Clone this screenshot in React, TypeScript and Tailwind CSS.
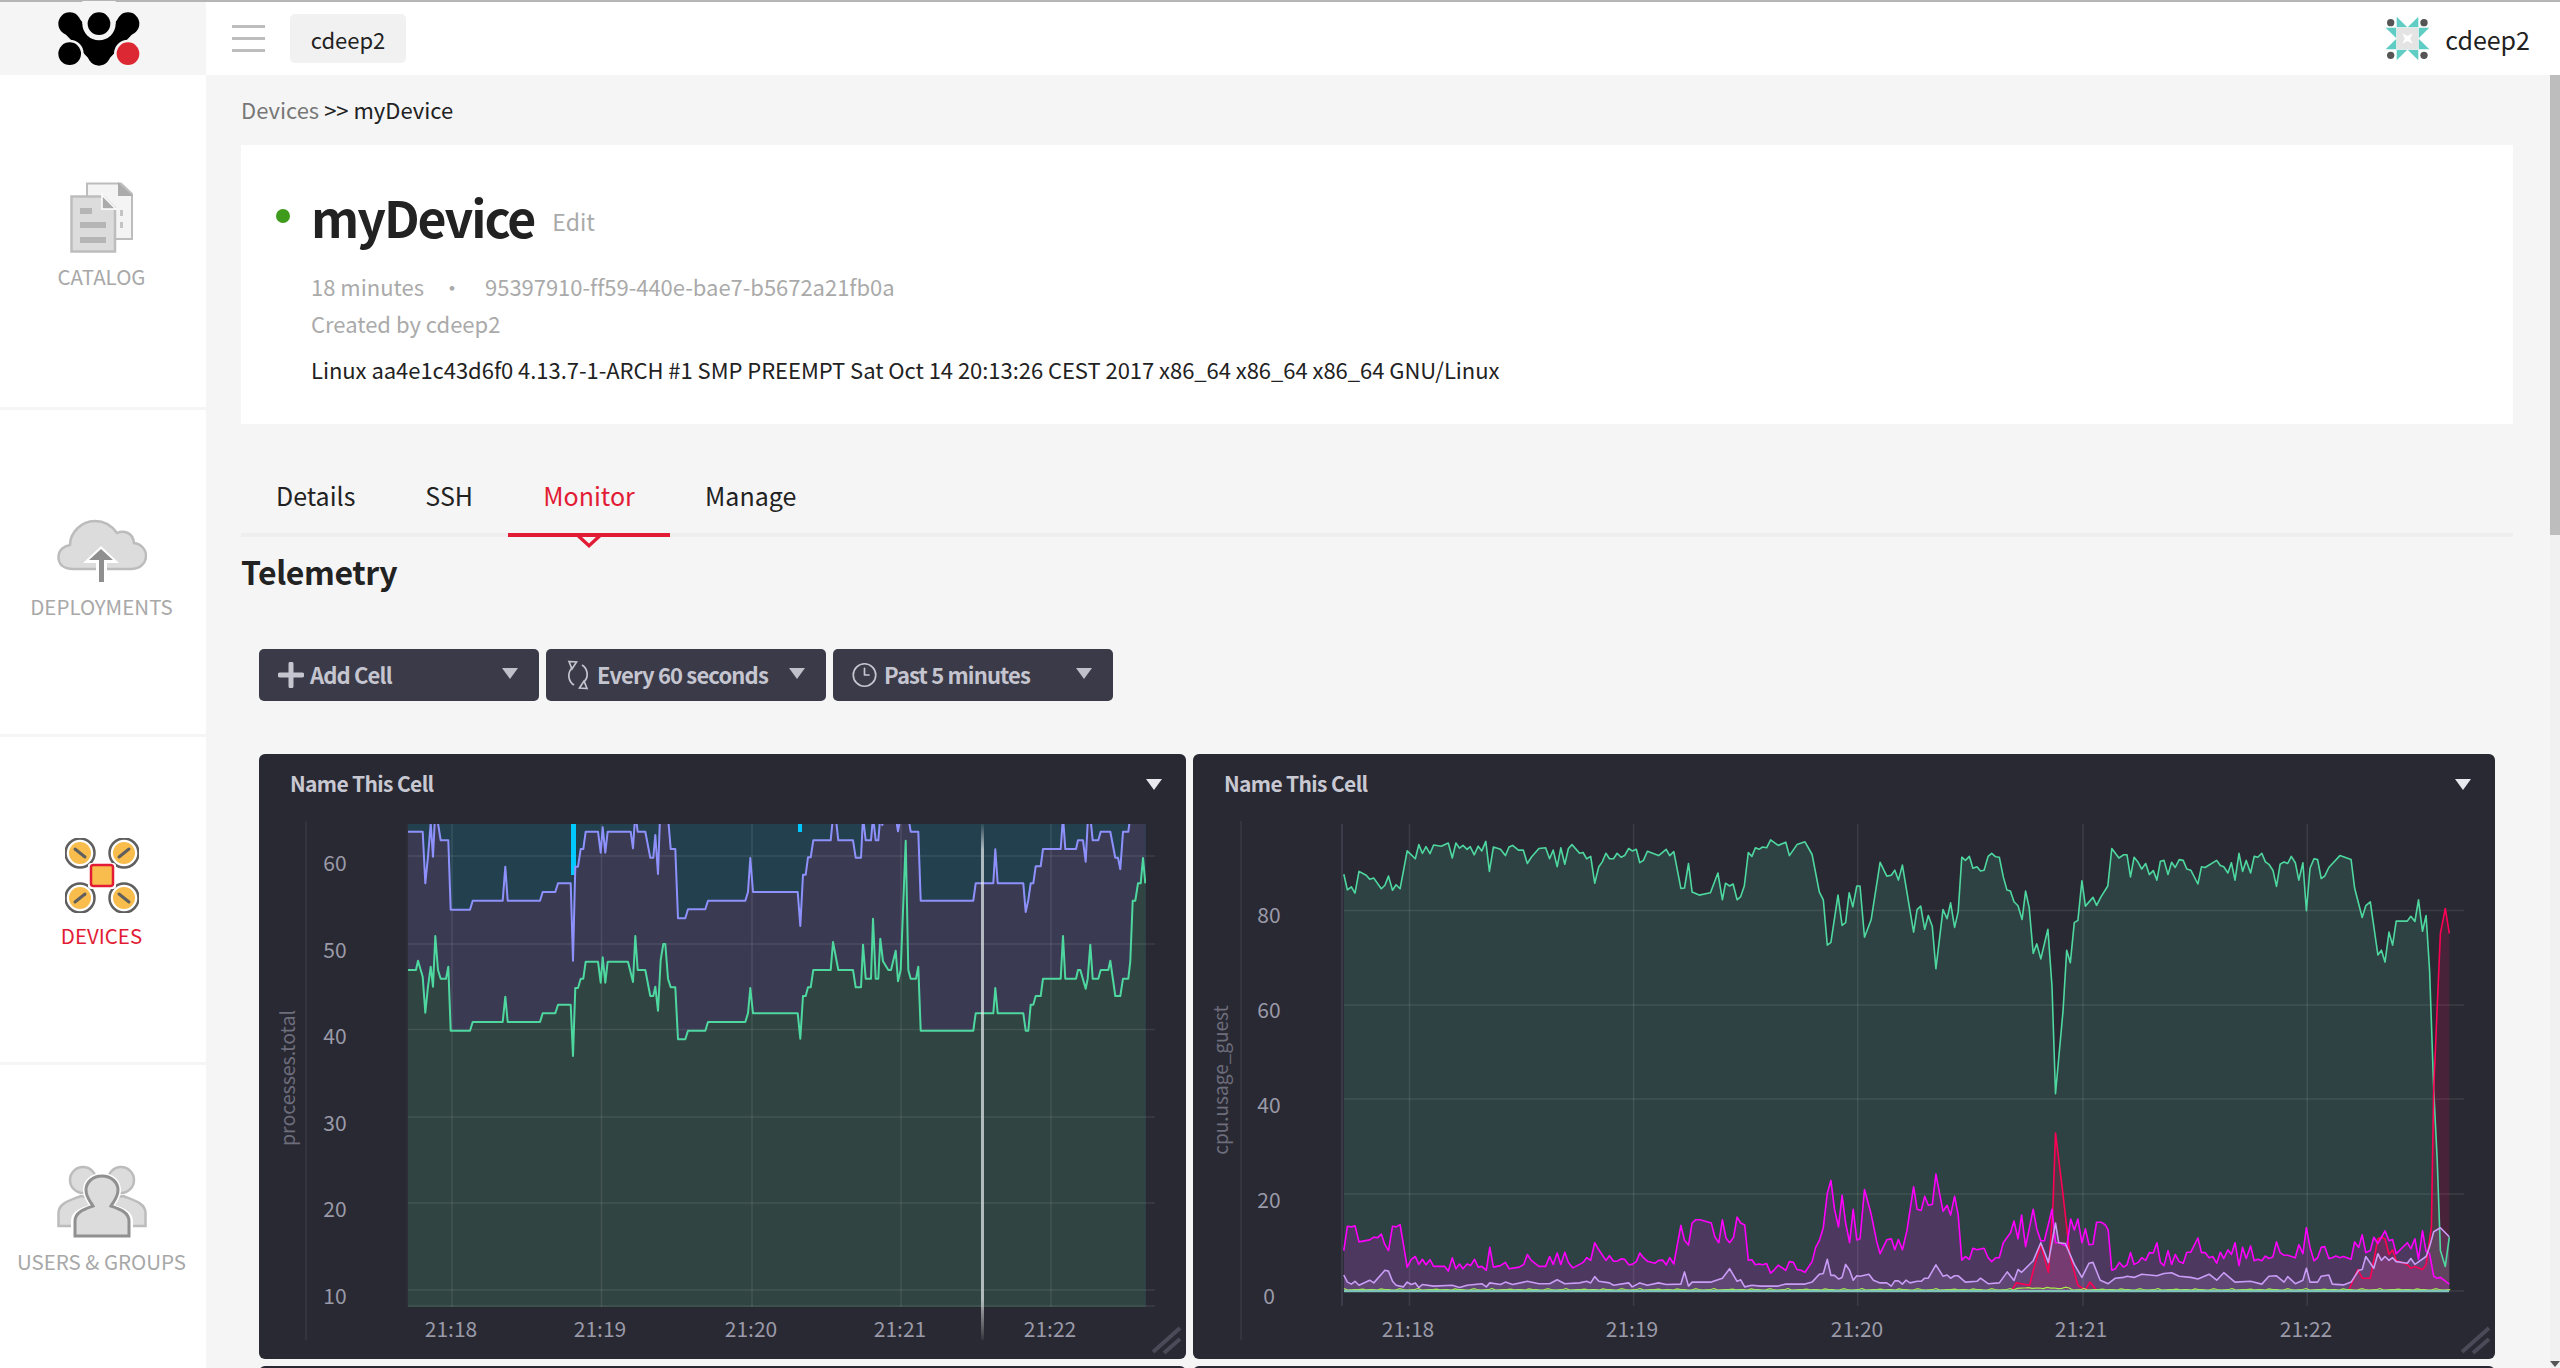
import React from "react";
import { Clock3 } from "lucide-react";

type P = number[];
const toPts = (flat: P, fx: (x: number) => number, fy: (y: number) => number) => {
  const out: [number, number][] = [];
  for (let i = 0; i < flat.length; i += 2) out.push([fx(flat[i]), fy(flat[i + 1])]);
  return out;
};
const str = (p: [number, number][]) => p.map(([x, y]) => `${x.toFixed(1)},${y.toFixed(1)}`).join(" ");
const area = (p: [number, number][], base: number) =>
  `${p[0][0].toFixed(1)},${base} ${str(p)} ${p[p.length - 1][0].toFixed(1)},${base}`;

/* chart 1 traces */
const c1a = (x: number) => 400 + x / 3;
const c1b = (x: number) => 775 + x / 3;
const c1y = (y: number) => 820 + y / 3;
const g1 = [
  ...toPts([24,450,48,450,54,422,68,470,76,578,84,500,92,440,99,500,106,348,114,450,122,476,138,476,145,440,152,632,210,632,218,606,308,606,316,530,323,606,420,606,428,580,466,580,474,554,512,554,519,708,526,504,534,504,542,476,550,476,557,425,594,425,602,488,608,412,616,488,623,425,684,425,699,486,706,348,713,450,736,450,751,528,760,528,766,500,774,572,782,420,790,372,796,372,804,476,812,502,826,502,834,658,856,658,864,632,916,632,924,606,1036,606,1044,580,1051,504,1059,580,1125,580], c1a, c1y),
  ...toPts([68,580,76,656,84,528,92,528,99,502,107,502,115,450,167,450,174,366,190,450,234,450,242,502,258,502,264,374,272,476,288,476,294,296,302,476,310,476,316,356,324,424,340,450,348,450,362,392,369,484,377,450,392,62,400,450,407,476,423,476,430,440,437,632,595,632,602,580,655,580,661,504,668,580,745,580,752,632,760,632,767,554,775,554,782,528,797,528,804,476,857,476,864,348,871,476,903,476,909,450,916,450,932,506,938,476,946,374,953,476,970,476,977,450,1000,450,1006,422,1021,528,1036,528,1044,476,1060,476,1066,424,1073,242,1081,242,1089,190,1097,190,1104,114,1111,190], c1b, c1y),
];
const p1 = [
  ...toPts([24,35,68,35,76,190,84,110,92,10,99,110,106,-30,114,10,122,61,145,61,152,269,210,269,218,242,308,242,316,140,323,242,420,242,428,216,466,216,474,190,512,190,519,422,526,140,534,140,542,87,550,87,557,35,594,35,602,98,608,22,616,98,623,35,692,35,699,85,706,-20,713,35,736,35,751,113,760,113,766,45,774,162,780,-10,804,-10,812,87,826,87,834,295,856,295,864,268,916,268,924,242,1036,242,1044,216,1051,114,1059,216,1125,216], c1a, c1y),
  ...toPts([68,216,76,318,84,164,92,164,99,112,107,112,115,61,167,61,174,-10,182,-10,190,61,234,61,242,113,258,113,264,-10,272,61,288,61,294,-10,302,61,310,61,316,-10,322,15,328,-10,362,-10,369,34,377,-10,400,-10,407,35,430,35,437,242,595,242,602,190,655,190,661,88,668,190,745,190,752,276,760,240,767,190,775,190,782,139,797,139,804,87,857,87,864,-10,871,87,903,87,909,61,924,61,932,125,939,-10,946,-10,953,61,970,61,977,35,1006,35,1021,113,1029,113,1036,148,1044,35,1060,35,1066,-10,1111,-10], c1b, c1y),
];

/* chart 2 traces */
const z5 = (x: number) => 1180 + x / 2.24;
const z6 = (x: number) => 1860 + x / 2.24;
const zy = (y: number) => 750 + y / 2.537;
const gr2 = [
  ...toPts([367,315,375,355,384,347,392,363,401,308,417,318,425,328,434,325,451,352,459,343,467,320,476,356,484,342,493,352,509,256,527,276,535,240,543,262,551,245,560,263,568,241,585,244,601,236,610,274,618,236,626,249,634,242,643,252,650,245,659,266,668,244,676,256,685,232,693,308,702,246,718,252,729,268,737,246,745,242,758,254,769,254,778,288,787,272,804,250,819,248,828,276,836,254,845,296,853,248,862,290,870,250,878,240,895,262,903,260,911,276,920,270,929,338,938,296,946,284,954,262,962,276,971,276,979,262,988,272,996,268,1005,250,1013,256,1022,252,1030,286,1038,280,1047,257,1072,268,1089,252,1097,268,1106,258,1122,351,1130,350,1139,288,1147,360,1163,368,1188,362,1205,312,1215,380,1222,338,1231,345,1239,340,1248,380,1256,372,1264,345,1273,260,1281,270,1289,248,1297,252,1305,246,1314,248,1323,228,1340,242,1357,234,1365,268,1382,240,1400,233,1416,265,1432,360,1441,380,1450,495,1458,488,1474,368,1483,445,1491,438,1499,362,1507,398,1516,345], z5, zy),
  ...toPts([0,345,10,475,25,430,45,285,60,320,70,318,78,305,86,330,95,292,120,462,128,405,136,396,145,455,153,420,162,448,170,555,186,405,195,428,203,388,212,450,220,410,228,272,236,280,245,270,253,300,262,296,270,307,278,305,287,270,295,262,304,271,312,272,321,322,329,355,337,358,345,385,354,395,363,430,371,358,379,400,388,516,396,492,405,530,421,455,430,600,438,872,455,660,463,508,471,540,480,438,488,432,497,332,505,396,522,374,530,394,540,372,555,345,564,250,580,274,590,266,598,266,606,322,614,272,623,285,631,302,640,288,648,316,657,306,665,330,673,282,681,280,690,316,698,285,706,298,715,278,724,280,732,302,741,305,757,340,765,296,773,298,799,280,807,293,815,296,824,312,832,286,840,330,849,262,857,308,865,280,875,312,883,270,891,272,900,262,908,284,916,290,925,305,933,346,941,290,950,284,958,288,966,270,975,286,983,330,992,286,1000,408,1008,300,1017,276,1025,278,1033,326,1041,320,1050,298,1075,268,1100,278,1108,350,1125,425,1133,395,1143,385,1160,520,1168,508,1176,538,1185,462,1193,495,1201,434,1226,434,1234,422,1243,435,1251,380,1260,460,1268,420,1276,560,1285,860,1293,1040,1300,1270,1311,1310,1320,1236], z6, zy),
];
const mg2 = [
  ...toPts([367,1270,375,1208,384,1210,392,1207,401,1248,425,1243,434,1236,443,1237,451,1228,459,1255,467,1270,476,1208,484,1210,493,1204,509,1312,518,1292,527,1285,535,1305,543,1292,551,1306,560,1293,568,1310,593,1310,601,1322,610,1288,618,1316,626,1304,634,1316,643,1304,651,1308,660,1292,668,1312,676,1310,686,1320,694,1262,702,1312,718,1308,729,1300,737,1316,760,1312,770,1305,778,1280,787,1295,804,1310,819,1310,828,1285,836,1305,845,1276,853,1305,862,1274,870,1300,880,1314,895,1305,903,1300,911,1288,920,1295,929,1250,938,1268,954,1295,962,1283,971,1297,979,1297,988,1291,996,1292,1005,1306,1013,1305,1022,1298,1030,1276,1038,1288,1047,1297,1064,1302,1072,1295,1081,1294,1089,1306,1097,1288,1106,1304,1122,1206,1130,1244,1139,1256,1147,1200,1155,1192,1165,1192,1190,1200,1198,1235,1207,1250,1215,1192,1223,1238,1231,1250,1240,1236,1248,1185,1256,1200,1265,1205,1273,1294,1281,1293,1289,1306,1297,1304,1305,1306,1314,1303,1323,1327,1330,1320,1340,1307,1357,1320,1365,1298,1374,1300,1382,1318,1391,1320,1400,1325,1416,1298,1424,1262,1432,1245,1441,1212,1450,1125,1458,1092,1466,1165,1475,1210,1483,1130,1491,1200,1500,1250,1508,1165,1516,1243], z5, zy),
  ...toPts([0,1240,10,1115,25,1178,37,1245,45,1278,60,1243,70,1240,78,1268,86,1242,95,1268,105,1220,120,1108,128,1165,137,1168,145,1132,153,1155,162,1153,170,1076,186,1170,195,1155,203,1180,212,1132,220,1180,228,1294,236,1285,245,1292,253,1264,262,1268,278,1264,287,1288,295,1298,304,1288,312,1288,321,1250,337,1225,345,1195,354,1240,362,1180,371,1260,388,1165,396,1215,405,1245,413,1245,430,1165,438,1250,447,1250,463,1260,472,1190,480,1218,488,1190,497,1250,505,1215,513,1255,522,1254,530,1198,540,1198,550,1205,556,1218,564,1320,572,1316,581,1300,590,1312,598,1306,606,1275,614,1305,623,1300,631,1288,640,1295,648,1275,657,1276,665,1250,673,1300,681,1308,690,1270,698,1305,706,1280,715,1298,724,1302,732,1274,741,1274,757,1238,765,1275,773,1275,782,1288,790,1285,799,1302,807,1274,815,1290,824,1268,832,1280,840,1250,849,1308,857,1262,865,1290,875,1258,883,1296,891,1292,900,1296,908,1284,916,1290,925,1286,933,1248,941,1275,950,1282,958,1282,975,1288,983,1255,992,1278,1000,1212,1008,1262,1017,1296,1025,1288,1033,1262,1041,1260,1050,1290,1058,1288,1066,1284,1075,1288,1083,1285,1100,1292,1108,1248,1117,1262,1125,1230,1133,1275,1143,1270,1151,1236,1160,1252,1176,1220,1185,1245,1193,1242,1201,1278,1226,1250,1234,1265,1243,1240,1251,1292,1260,1220,1268,1272,1276,1278,1285,1335,1293,1340,1300,1338,1320,1355], z6, zy),
];
const lv2 = [
  ...toPts([367,1332,375,1350,384,1355,392,1348,401,1358,425,1345,434,1352,459,1320,467,1322,476,1348,484,1358,500,1362,509,1350,518,1356,527,1352,535,1364,543,1356,568,1360,610,1358,626,1364,643,1358,676,1354,686,1362,694,1352,718,1356,729,1350,745,1356,778,1348,804,1354,828,1354,845,1344,862,1354,895,1352,911,1348,920,1352,929,1336,938,1348,962,1352,971,1358,1005,1352,1013,1362,1030,1352,1047,1358,1072,1352,1089,1356,1122,1355,1130,1324,1139,1360,1147,1350,1190,1350,1215,1340,1231,1316,1248,1348,1256,1344,1265,1362,1281,1358,1300,1360,1340,1360,1357,1355,1382,1355,1400,1355,1416,1350,1432,1330,1441,1328,1450,1292,1458,1333,1466,1333,1475,1342,1483,1338,1491,1305,1500,1320,1508,1345,1516,1334], z5, zy),
  ...toPts([0,1335,20,1330,30,1345,45,1352,60,1352,70,1360,78,1347,86,1347,95,1355,103,1345,112,1352,128,1348,137,1348,145,1340,153,1340,170,1306,186,1335,195,1332,203,1340,212,1334,220,1334,236,1350,262,1348,270,1340,287,1354,312,1352,330,1324,345,1346,354,1318,362,1325,388,1296,405,1250,422,1300,438,1200,445,1250,460,1252,480,1305,497,1338,513,1302,522,1300,538,1345,556,1354,572,1340,590,1338,598,1335,614,1338,631,1330,665,1334,681,1328,698,1326,715,1335,741,1338,757,1342,782,1330,799,1345,815,1326,840,1350,875,1348,900,1355,916,1335,933,1334,950,1350,958,1336,975,1354,992,1345,1000,1315,1008,1350,1025,1350,1033,1335,1050,1332,1058,1355,1083,1357,1100,1350,1117,1320,1125,1318,1133,1285,1151,1315,1160,1278,1168,1295,1176,1285,1185,1295,1193,1288,1201,1298,1226,1302,1234,1290,1243,1305,1268,1285,1276,1260,1285,1222,1300,1212,1320,1235], z6, zy),
];
const rd2a = toPts([340,1370,350,1352,380,1358,390,1312,405,1255,422,1325,432,1160,438,972,455,1130,470,1280,488,1358,505,1370,515,1350,530,1370], z6, zy);
const rd2b = toPts([1095,1370,1115,1318,1125,1340,1143,1340,1160,1240,1168,1236,1176,1240,1185,1280,1193,1268,1201,1295,1226,1305,1234,1315,1243,1310,1260,1318,1268,1305,1280,1210,1285,860,1300,465,1311,402,1320,465], z6, zy);
const lime = Array.from({ length: 300 }, (_, i): [number, number] => {
  const x = 1344 + i * 3.7;
  const bump = x > 2015 && x < 2070 ? -1.5 : 0;
  return [x, 1289.5 + bump - ((i * 7) % 5 === 0 ? 1 : 0) + ((i * 3) % 4) * 0.2];
});

const Grid = ({ hs, vs, x1, x2, y1, y2 }: { hs: number[]; vs: number[]; x1: number; x2: number; y1: number; y2: number }) => (
  <g stroke="#ffffff" strokeOpacity="0.09" strokeWidth="1.5">
    {hs.map((y) => <line key={y} x1={x1} x2={x2} y1={y} y2={y} />)}
    {vs.map((x) => <line key={x} x1={x} x2={x} y1={y1} y2={y2} />)}
  </g>
);

const Handle = ({ x, y }: { x: number; y: number }) => (
  <g stroke="#4a4a58" strokeWidth="4" transform={`translate(${x} ${y})`}>
    <line x1="0" y1="0" x2="27" y2="-24" />
    <line x1="11" y1="1" x2="27" y2="-13" />
  </g>
);

const axisText = "fill-[#9a9aa8] text-[21px]";
const Chart1 = () => (
  <svg viewBox="259 814 927 545" className="block w-[927px] h-[545px]">
    <defs>
      <clipPath id="c1"><rect x="406" y="824" width="740" height="483" /></clipPath>
      <linearGradient id="hair" x1="0" x2="0" y1="0" y2="1">
        <stop offset="0" stopColor="#fff" stopOpacity="0.05" />
        <stop offset="0.05" stopColor="#e8eeee" stopOpacity="0.7" />
        <stop offset="0.92" stopColor="#e8eeee" stopOpacity="0.7" />
        <stop offset="1" stopColor="#fff" stopOpacity="0.05" />
      </linearGradient>
    </defs>
    <line x1="306" x2="306" y1="821" y2="1340" stroke="#343440" strokeWidth="2" />
    <g clipPath="url(#c1)">
      <rect x="406" y="824" width="740" height="483" fill="#2d2d3a" />
      <rect x="408" y="824" width="738" height="483" fill="#23404f" />
      <polygon points={area(p1, 1307)} fill="#3a3a52" />
      <polygon points={area(g1, 1307)} fill="#304442" />
      <rect x="571" y="824" width="5" height="51" fill="#00c9ff" />
      <rect x="798" y="824" width="4" height="8" fill="#00c9ff" />
    </g>
    <Grid hs={[856, 944, 1029.5, 1117, 1203, 1290, 1306]} vs={[452, 601.5, 752, 901, 1051]} x1={408} x2={1155} y1={824} y2={1307} />
    <g clipPath="url(#c1)" fill="none" strokeWidth="2" strokeLinejoin="round">
      <polyline points={str(p1)} stroke="#8e91fc" />
      <polyline points={str(g1)} stroke="#4ed8a0" />
    </g>
    <rect x="981" y="824" width="3" height="516" fill="url(#hair)" />
    {[["60", 871], ["50", 958], ["40", 1044], ["30", 1131], ["20", 1217], ["10", 1304]].map(([t, y]) => (
      <text key={t} x="335" y={y} textAnchor="middle" className={axisText}>{t}</text>
    ))}
    {[["21:18", 451], ["21:19", 600], ["21:20", 751], ["21:21", 900], ["21:22", 1050]].map(([t, x]) => (
      <text key={t} x={x} y="1337" textAnchor="middle" className={axisText}>{t}</text>
    ))}
    <text transform="translate(295 1078) rotate(-90)" textAnchor="middle" className="fill-[#6d6d7c] text-[19.5px]">processes.total</text>
    <Handle x={1153} y={1352} />
  </svg>
);

const Chart2 = () => {
  const f = 0.15;
  return (
    <svg viewBox="1193 814 1302 545" className="block w-[1302px] h-[545px]">
      <line x1="1241" x2="1241" y1="821" y2="1340" stroke="#343440" strokeWidth="2" />
      <line x1="1342" x2="1342" y1="824" y2="1306" stroke="#3a3a48" strokeWidth="2" />
      <polygon points={area(gr2, 1291)} fill="#4ed8a0" fillOpacity={f} />
      <polygon points={area(mg2, 1291)} fill="#ff00ff" fillOpacity={f} />
      <polygon points={area(lv2, 1291)} fill="#c99cf5" fillOpacity={f} />
      <polygon points={area(rd2a, 1291)} fill="#ff0055" fillOpacity={f} />
      <polygon points={area(rd2b, 1291)} fill="#ff0055" fillOpacity={f} />
      <Grid hs={[910.4, 1005, 1099, 1194, 1291]} vs={[1409.5, 1633.6, 1857.7, 2083, 2307.3]} x1={1344} x2={2464} y1={824} y2={1306} />
      <g fill="none" strokeWidth="1.6" strokeLinejoin="round">
        <polyline points={str(gr2)} stroke="#4ed8a0" />
        <polyline points={str(rd2a)} stroke="#ff0055" />
        <polyline points={str(rd2b)} stroke="#ff0055" />
        <polyline points={str(mg2)} stroke="#ff00ff" />
        <polyline points={str(lv2)} stroke="#c99cf5" />
        <polyline points={str(lime)} stroke="#a6f04a" strokeWidth="1.2" />
      </g>
      <line x1="1344" x2="2449" y1="1291" y2="1291" stroke="#7ec4b8" strokeWidth="2.5" />
      {[["80", 923], ["60", 1018], ["40", 1113], ["20", 1208], ["0", 1304]].map(([t, y]) => (
        <text key={t} x="1269" y={y} textAnchor="middle" className={axisText}>{t}</text>
      ))}
      {[["21:18", 1408], ["21:19", 1632], ["21:20", 1857], ["21:21", 2081], ["21:22", 2306]].map(([t, x]) => (
        <text key={t} x={x} y="1337" textAnchor="middle" className={axisText}>{t}</text>
      ))}
      <text transform="translate(1228 1080) rotate(-90)" textAnchor="middle" className="fill-[#6d6d7c] text-[19px]">cpu.usage_guest</text>
      <Handle x={2462} y={1352} />
    </svg>
  );
};

const Logo = () => (
  <svg viewBox="0 0 390 225" className="w-[130px] h-[75px]">
    <polyline points="95,68 183,160 270,68" fill="none" stroke="#000" strokeWidth="62" strokeLinecap="round" strokeLinejoin="round" />
    <line x1="183" y1="110" x2="183" y2="160" stroke="#000" strokeWidth="68" strokeLinecap="round" />
    <circle cx="183" cy="68" r="50" fill="#f5f5f5" />
    <rect x="133" y="0" width="100" height="68" fill="#f5f5f5" />
    <circle cx="95" cy="68" r="34" />
    <circle cx="270" cy="68" r="34" />
    <circle cx="183" cy="68" r="34" />
    <circle cx="95" cy="158" r="42" fill="#f5f5f5" />
    <circle cx="95" cy="158" r="34" />
    <circle cx="270" cy="158" r="42" fill="#f5f5f5" />
    <circle cx="270" cy="158" r="34" fill="#dc2833" />
  </svg>
);

const CatalogIcon = () => (
  <svg viewBox="0 0 63 71" className="w-[63px] h-[71px]">
    <path d="M17 1.5H51L62 12V57H17Z" fill="#f4f4f4" stroke="#bdbdbd" strokeWidth="2" />
    <path d="M48 0L63 14H48Z" fill="#ababab" />
    <rect x="50" y="28" width="3" height="6" fill="#c4c4c4" />
    <rect x="50" y="40" width="3" height="6" fill="#c4c4c4" />
    <path d="M1.5 14.5H33L45 26V69.5H1.5Z" fill="#dcdcdc" stroke="#bdbdbd" strokeWidth="2.5" />
    <path d="M32 13L46 27H32Z" fill="#ababab" stroke="#fff" strokeWidth="1.5" />
    <rect x="10" y="26" width="12" height="6" fill="#b5b5b5" />
    <rect x="10" y="40" width="26" height="6" fill="#b5b5b5" />
    <rect x="10" y="55" width="26" height="6" fill="#b5b5b5" />
  </svg>
);

const CloudIcon = () => (
  <svg viewBox="0 0 90 64" className="w-[90px] h-[64px]">
    <path d="M16 50C6 50 1.5 45 1.5 38C1.5 31 7 27 13 26C13 14 24 2 38 2C49 2 55 7 60 14C66 11 76 13 77 24C84 25 89 30 89 37C89 45 82 50 74 50Z" fill="#dcdcdc" stroke="#bcbcbc" strokeWidth="2.5" />
    <path d="M26 44L44 27L62 44L50 44V64H39V44Z" fill="#fff" />
    <path d="M32 41L44 30L56 41L47 41V63H42V41Z" fill="#8f8f8f" />
  </svg>
);

const DroneIcon = () => (
  <svg viewBox="0 0 74 75" className="w-[74px] h-[75px]">
    {[[15, 15, 1], [59, 15, -1], [15, 60, -1], [59, 60, 1]].map(([x, y, s], i) => (
      <g key={i}>
        <circle cx={x} cy={y} r="14.5" fill="none" stroke="#5f5f5f" strokeWidth="2.5" />
        <circle cx={x} cy={y} r="11" fill="#f8bd4c" />
        <line x1={x - 5 * s} y1={y - 4} x2={x + 5 * s} y2={y + 4} stroke="#5f5f5f" strokeWidth="3" strokeLinecap="round" />
      </g>
    ))}
    <rect x="23" y="25" width="28" height="26" rx="3" fill="#fff" />
    <rect x="26" y="27" width="22" height="21" rx="2.5" fill="#f8bd4c" stroke="#e21c35" strokeWidth="2.5" />
  </svg>
);

const UsersIcon = () => (
  <svg viewBox="0 0 90 73" className="w-[90px] h-[73px]">
    <g fill="#dcdcdc" stroke="#bcbcbc" strokeWidth="2.5">
      <circle cx="26" cy="15" r="13" />
      <path d="M1.5 61V48C1.5 38 14 35 24 31L40 34V61Z" />
      <circle cx="64" cy="15" r="13" />
      <path d="M88.5 61V48C88.5 38 76 35 66 31L50 34V61Z" />
    </g>
    <path d="M45 8C33 8 26 16 26 25C26 32 30 37 32 40C24 43 14 46 14 56V73H76V56C76 46 66 43 58 40C60 37 64 32 64 25C64 16 57 8 45 8Z" fill="#fff" />
    <path d="M45 11C36 11 29 17 29 25C29 32 33 36 36 41C28 44 18 47 18 56V71H72V56C72 47 62 44 54 41C57 36 61 32 61 25C61 17 54 11 45 11Z" fill="#dcdcdc" stroke="#909090" strokeWidth="3" />
  </svg>
);

const Avatar = () => (
  <svg viewBox="0 0 135 135" className="w-[45px] h-[45px]">
    {[0, 90, 180, 270].map((r) => (
      <g key={r} transform={`rotate(${r} 67.5 67.5)`} fill="#5fcdc4">
        <path d="M35 2L67 34H35Z" />
        <path d="M100 2V34H68Z" />
      </g>
    ))}
    <rect x="35" y="35" width="65" height="65" fill="#e4e4e4" />
    <path d="M67.5 45L73 62L90 67.5L73 73L67.5 90L62 73L45 67.5L62 62Z" fill="#fff" transform="rotate(45 67.5 67.5)" />
    {[[17, 20], [117, 20], [17, 118], [117, 118]].map(([x, y]) => <circle key={x * y} cx={x} cy={y} r="11" fill="#555" />)}
  </svg>
);

const Caret = ({ cls }: { cls: string }) => (
  <span className={`block w-0 h-0 border-l-[8px] border-r-[8px] border-t-[11px] border-l-transparent border-r-transparent ${cls}`} />
);

const NavItem = ({ icon, label, h, top, lift, active }: { icon: React.ReactNode; label: string; h: string; top: string; lift: string; active?: boolean }) => (
  <div className={`flex flex-col items-center pr-[3px] ${h} ${top} border-b-[3px] border-[#f5f5f5] last:border-b-0`}>
    {icon}
    <span className={`${lift} text-[20.5px] leading-[28px] ${active ? "text-[#e21c35]" : "text-[#a8a8a8]"}`}>{label}</span>
  </div>
);

const RefreshIcon = () => (
  <svg viewBox="0 0 26 30" className="w-[26px] h-[30px]" fill="none" stroke="#c5c5d0" strokeWidth="1.7">
    <path d="M6.5 8.5A11 11 0 0 0 9 25" />
    <path d="M19.5 21.5A11 11 0 0 0 17 5" />
    <path d="M4 1.5L11.5 2L7 9Z" />
    <path d="M22 28.5L14.5 28L19 21Z" />
  </svg>
);

const ToolBtn = ({ icon, label }: { icon: React.ReactNode; label: string }) => (
  <div className="flex items-center w-[280px] h-[52px] rounded-[5px] bg-[#3a3a48] pl-[18px] pr-[21px] text-[#c5c5d0]">
    <span className="flex justify-center w-[27px] shrink-0">{icon}</span>
    <span className="ml-[6px] -mt-[3px] text-[22px] leading-[30px] font-semibold tracking-[-0.85px] whitespace-nowrap">{label}</span>
    <span className="ml-auto -mt-[4px]"><Caret cls="border-t-[#c0c0ca]" /></span>
  </div>
);

const Cell = ({ w, pad, children }: { w: string; pad: string; children: React.ReactNode }) => (
  <div className={`${w} h-[605px] shrink-0 rounded-[6px] bg-[#292933] overflow-hidden`}>
    <div className={`flex items-center justify-between h-[60px] ${pad}`}>
      <span className="-mt-[3px] text-[21px] leading-[28px] font-semibold tracking-[-0.65px] text-[#c8c8d2]">Name This Cell</span>
      <Caret cls="border-t-[#e8e8ee]" />
    </div>
    {children}
  </div>
);

export default function App() {
  return (
    <div className="w-[2560px] h-[1368px] overflow-hidden flex flex-col bg-[#f5f5f5] font-['Noto_Sans_CJK_SC','Liberation_Sans',sans-serif] text-[#222]">
      <header className="flex items-center h-[75px] shrink-0 border-t-2 border-[#b5b5b5] bg-white">
        <div className="flex justify-center items-center w-[206px] h-full bg-[#f5f5f5] -mt-[1px]"><Logo /></div>
        <div className="flex flex-col gap-[9px] ml-[26px] w-[33px]">
          <span className="h-[3px] bg-[#bdbdbd]" />
          <span className="h-[3px] bg-[#bdbdbd]" />
          <span className="h-[3px] bg-[#bdbdbd]" />
        </div>
        <div className="flex items-center justify-center ml-[25px] w-[116px] h-[49px] rounded-[5px] bg-[#f1f1f1] text-[22px] leading-[30px] text-[#222]">cdeep2</div>
        <div className="ml-auto flex items-center gap-[15px] pr-[30px]">
          <Avatar />
          <span className="text-[25px] leading-[32px] text-[#222]">cdeep2</span>
        </div>
      </header>

      <div className="flex flex-1 min-h-0">
        <nav className="flex flex-col w-[206px] shrink-0 bg-white">
          <NavItem h="h-[335px]" top="pt-[107px]" lift="mt-[9px]" icon={<CatalogIcon />} label="CATALOG" />
          <NavItem h="h-[327px]" top="pt-[109px]" lift="mt-[9px]" icon={<CloudIcon />} label="DEPLOYMENTS" />
          <NavItem h="h-[328px]" top="pt-[101px]" lift="mt-[8px]" active icon={<DroneIcon />} label="DEVICES" />
          <NavItem h="h-[303px]" top="pt-[100px]" lift="mt-[9px]" icon={<UsersIcon />} label="USERS & GROUPS" />
        </nav>

        <main className="flex-1 min-w-0 overflow-hidden pl-[35px] pr-[37px]">
          <div className="flex items-center h-[70px] pb-[3px] text-[22px] leading-[30px]">
            <span className="text-[#777]">Devices</span>
            <span className="ml-[5px] text-[#222]">&gt;&gt; myDevice</span>
          </div>

          <section className="h-[279px] bg-white pl-[35px] pt-[38px]">
            <div className="flex items-center h-[66px]">
              <span className="w-[14px] h-[14px] rounded-full bg-[#3f9b1b]" />
              <h1 className="ml-[21px] text-[50px] leading-[66px] font-bold tracking-[-2px] text-[#222]">myDevice</h1>
              <span className="ml-[18px] mt-[10px] text-[23px] leading-[30px] text-[#aaa]">Edit</span>
            </div>
            <div className="pl-[35px] pt-[19px] text-[22px] leading-[37px] text-[#aaa]">
              <div className="flex">
                <span>18 minutes</span>
                <span className="ml-[17px]">•</span>
                <span className="ml-[22px] tracking-[-0.03px]">95397910-ff59-440e-bae7-b5672a21fb0a</span>
              </div>
              <div>Created by cdeep2</div>
              <div className="mt-[9px] tracking-[-0.04px] text-[#222]">Linux aa4e1c43d6f0 4.13.7-1-ARCH #1 SMP PREEMPT Sat Oct 14 20:13:26 CEST 2017 x86_64 x86_64 x86_64 GNU/Linux</div>
            </div>
          </section>

          <div className="flex items-end h-[113px] border-b-4 border-[#eeeeee] text-[25px] leading-[32px]">
            <div className="flex items-center h-[72px] px-[35px] pb-[4px]">Details</div>
            <div className="flex items-center h-[72px] px-[35px] pb-[4px]">SSH</div>
            <div className="relative flex items-center justify-center h-[72px] w-[162px] pb-[4px] text-[#e21c35]">
              Monitor
              <span className="absolute left-0 right-0 -bottom-[4px] h-[4px] bg-[#e21c35]" />
              <svg viewBox="0 0 24 11" className="absolute left-[69px] -bottom-[15px] w-[24px] h-[11px]"><path d="M0 0H5L12 6.5L19 0H24L12 11Z" fill="#e21c35" /></svg>
            </div>
            <div className="flex items-center h-[72px] px-[35px] pb-[4px]">Manage</div>
          </div>

          <h2 className="h-[72px] pt-[16px] text-[32px] leading-[36px] font-bold tracking-[-0.4px] text-[#222]">Telemetry</h2>

          <div className="flex gap-[7px] pl-[18px] pt-[40px]">
            <ToolBtn icon={<svg viewBox="0 0 26 26" className="w-[26px] h-[26px]"><path d="M13 2V24M2 13H24" stroke="#c5c5d0" strokeWidth="5" strokeLinecap="round" /></svg>} label="Add Cell" />
            <ToolBtn icon={<RefreshIcon />} label="Every 60 seconds" />
            <ToolBtn icon={<Clock3 size={28} strokeWidth={1.5} color="#c5c5d0" />} label="Past 5 minutes" />
          </div>

          <div className="flex gap-[7px] pl-[18px] pt-[53px]">
            <Cell w="w-[927px]" pad="pl-[31px] pr-[24px]"><Chart1 /></Cell>
            <Cell w="w-[1302px]" pad="pl-[31px] pr-[24px]"><Chart2 /></Cell>
          </div>
          <div className="flex gap-[7px] pl-[18px] pt-[7px]">
            <div className="w-[927px] h-[100px] shrink-0 rounded-t-[6px] bg-[#292933]" />
            <div className="w-[1302px] h-[100px] shrink-0 rounded-t-[6px] bg-[#292933]" />
          </div>
        </main>

        <aside className="flex flex-col justify-between w-[10px] shrink-0 bg-[#f1f1f1]">
          <div className="h-[460px] bg-[#bdbdbd]" />
          <div className="flex justify-center pb-[1px]"><span className="block w-0 h-0 border-l-[5px] border-r-[5px] border-t-[6px] border-l-transparent border-r-transparent border-t-[#555]" /></div>
        </aside>
      </div>
    </div>
  );
}
